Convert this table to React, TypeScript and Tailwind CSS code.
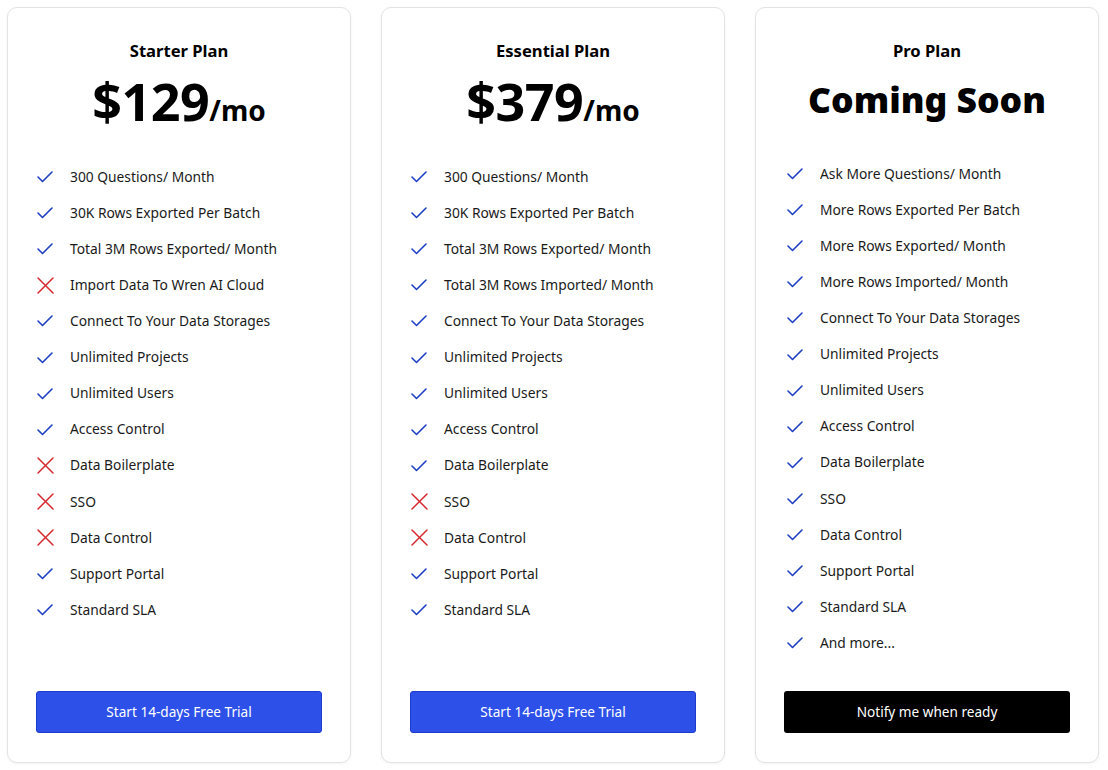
import React from "react";

type Feat = [string, boolean];

const Check = () => (
  <svg width="16" height="12" viewBox="0 0 16 12" fill="none" className="shrink-0">
    <path d="M1 6 L5.5 10.5 L15 1" stroke="#1e3fc2" strokeWidth="1.6" strokeLinecap="round" strokeLinejoin="round" />
  </svg>
);

const Cross = () => (
  <svg width="17" height="17" viewBox="0 0 17 17" fill="none" className="shrink-0">
    <path d="M1 1 L16 16 M16 1 L1 16" stroke="#d42a2f" strokeWidth="1.5" strokeLinecap="round" />
  </svg>
);

const starter: Feat[] = [
  ["300 Questions/ Month", true],
  ["30K Rows Exported Per Batch", true],
  ["Total 3M Rows Exported/ Month", true],
  ["Import Data To Wren AI Cloud", false],
  ["Connect To Your Data Storages", true],
  ["Unlimited Projects", true],
  ["Unlimited Users", true],
  ["Access Control", true],
  ["Data Boilerplate", false],
  ["SSO", false],
  ["Data Control", false],
  ["Support Portal", true],
  ["Standard SLA", true],
];

const essential: Feat[] = [
  ["300 Questions/ Month", true],
  ["30K Rows Exported Per Batch", true],
  ["Total 3M Rows Exported/ Month", true],
  ["Total 3M Rows Imported/ Month", true],
  ["Connect To Your Data Storages", true],
  ["Unlimited Projects", true],
  ["Unlimited Users", true],
  ["Access Control", true],
  ["Data Boilerplate", true],
  ["SSO", false],
  ["Data Control", false],
  ["Support Portal", true],
  ["Standard SLA", true],
];

const pro: Feat[] = [
  ["Ask More Questions/ Month", true],
  ["More Rows Exported Per Batch", true],
  ["More Rows Exported/ Month", true],
  ["More Rows Imported/ Month", true],
  ["Connect To Your Data Storages", true],
  ["Unlimited Projects", true],
  ["Unlimited Users", true],
  ["Access Control", true],
  ["Data Boilerplate", true],
  ["SSO", true],
  ["Data Control", true],
  ["Support Portal", true],
  ["Standard SLA", true],
  ["And more...", true],
];

function Features({ items }: { items: Feat[] }) {
  return (
    <ul className="flex flex-col">
      {items.map(([t, ok]) => (
        <li key={t} className="flex items-center h-[36.1px]">
          <span className="w-[34px] flex items-center pl-[1px]">{ok ? <Check /> : <Cross />}</span>
          <span className="text-[13.8px] text-[#1a1a1a]">{t}</span>
        </li>
      ))}
    </ul>
  );
}

function Card({ children }: { children: React.ReactNode }) {
  return (
    <div className="w-[344px] h-[756px] bg-white border border-[#e3e3e3] rounded-[10px] shadow-[0_1px_3px_rgba(0,0,0,0.05)] flex flex-col px-[28px] pt-[29px] pb-[29px]">
      {children}
    </div>
  );
}

export default function App() {
  return (
    <div
      className="w-[1108px] h-[770px] bg-white flex gap-[30px] pl-[7px] pt-[7px]"
      style={{ fontFamily: '"Noto Sans", "Open Sans", sans-serif' }}
    >
      <Card>
        <h2 className="text-center text-[16.6px] font-bold text-black leading-[28px]">Starter Plan</h2>
        <div className="text-center text-black font-bold mt-[6px] h-[60px] leading-[60px]">
          <span className="text-[52px] tracking-[-0.5px]">$129</span>
          <span className="text-[28px]">/mo</span>
        </div>
        <div className="mt-[28px]">
          <Features items={starter} />
        </div>
        <button className="mt-auto h-[42px] w-full rounded-[3px] bg-[#2d50e9] border border-[#1e3ccc] text-white text-[13.6px]">
          Start 14-days Free Trial
        </button>
      </Card>
      <Card>
        <h2 className="text-center text-[16.6px] font-bold text-black leading-[28px]">Essential Plan</h2>
        <div className="text-center text-black font-bold mt-[6px] h-[60px] leading-[60px]">
          <span className="text-[52px] tracking-[-0.5px]">$379</span>
          <span className="text-[28px]">/mo</span>
        </div>
        <div className="mt-[28px]">
          <Features items={essential} />
        </div>
        <button className="mt-auto h-[42px] w-full rounded-[3px] bg-[#2d50e9] border border-[#1e3ccc] text-white text-[13.6px]">
          Start 14-days Free Trial
        </button>
      </Card>
      <Card>
        <h2 className="text-center text-[16.6px] font-bold text-black leading-[28px]">Pro Plan</h2>
        <div className="text-center text-black font-black mt-[6px] h-[60px] leading-[56px] text-[35.5px]">
          Coming Soon
        </div>
        <div className="mt-[25px] pl-[2px]">
          <Features items={pro} />
        </div>
        <button className="mt-auto h-[42px] w-full rounded-[3px] bg-black text-white text-[13.6px]">
          Notify me when ready
        </button>
      </Card>
    </div>
  );
}
